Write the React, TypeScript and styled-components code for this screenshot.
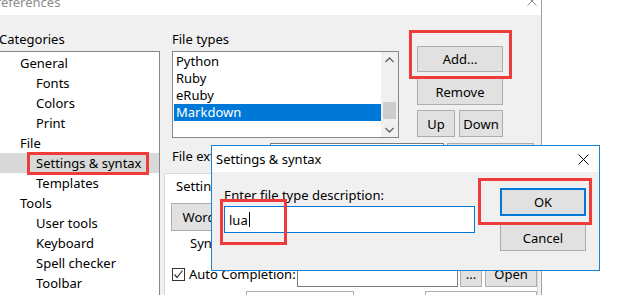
import styled, { createGlobalStyle } from "styled-components";

const GlobalStyle = createGlobalStyle`
  html, body {
    margin: 0;
    padding: 0;
    background: #fff;
  }
  body {
    font-family: "Noto Sans", "Open Sans", sans-serif;
    font-size: 13px;
    color: #000;
  }
`;

const RED = "#ee3b3b";

const Stage = styled.div`
  position: relative;
  width: 642px;
  height: 295px;
  overflow: hidden;
  background: #fff;
`;

const Window = styled.div`
  width: 542px;
  height: 320px;
  box-sizing: border-box;
  border-right: 1px solid #a0a0a0;
  display: flex;
  flex-direction: column;
  background: #f0f0f0;
`;

const TitleBar = styled.div`
  height: 15px;
  flex-shrink: 0;
  background: #fff;
  display: flex;
  justify-content: space-between;
  overflow: hidden;
`;

const TitleText = styled.span`
  margin: -6px 0 0 -12px;
  line-height: 16px;
  color: #8c8c8c;
`;

const TitleClose = styled.svg`
  margin: -4px 4px 0 0;
`;

const Body = styled.div`
  flex: 1;
  display: flex;
`;

const LeftPane = styled.div`
  width: 160px;
  display: flex;
  flex-direction: column;
  padding-top: 16px;
`;

const Label = styled.div<{ $indent?: number }>`
  line-height: 16px;
  height: 16px;
  margin-left: ${(p) => p.$indent ?? 0}px;
  white-space: nowrap;
`;

const Tree = styled.div`
  margin: 4px 0 0 -3px;
  width: 163px;
  flex: 1;
  box-sizing: border-box;
  border: 1px solid #828790;
  background: #fff;
  padding-top: 1px;
`;

const TreeRow = styled.div<{ $level: number; $selected?: boolean }>`
  height: 20px;
  line-height: 20px;
  padding-left: ${(p) => (p.$level === 0 ? 22 : 38)}px;
  background: ${(p) => (p.$selected ? "#d9d9d9" : "transparent")};
  white-space: nowrap;
`;

const RightPane = styled.div`
  flex: 1;
  padding-left: 12px;
  display: flex;
  flex-direction: column;
`;

const TopRow = styled.div`
  display: flex;
`;

const FileTypesGroup = styled.div`
  width: 227px;
  padding-top: 16px;
`;

const ListBox = styled.div`
  margin-top: 4px;
  height: 87px;
  box-sizing: border-box;
  border: 1px solid #828790;
  background: #fff;
  display: flex;
  padding: 1px 0 0 1px;
`;

const ListItems = styled.div`
  flex: 1;
`;

const ListItem = styled.div<{ $selected?: boolean }>`
  height: 17px;
  line-height: 17px;
  padding-left: 2px;
  background: ${(p) => (p.$selected ? "#0078d7" : "transparent")};
  color: ${(p) => (p.$selected ? "#fff" : "#000")};
`;

const ScrollBar = styled.div`
  width: 17px;
  margin-top: -1px;
  background: #f0f0f0;
  display: flex;
  flex-direction: column;
  align-items: center;
  justify-content: space-between;
  padding: 5px 0 4px;
  box-sizing: border-box;
  position: relative;
`;

const ScrollThumb = styled.div`
  position: absolute;
  left: 2px;
  right: 2px;
  top: 50px;
  height: 17px;
  background: #cdcdcd;
`;

const ButtonCol = styled.div`
  margin: 31px 0 0 18px;
  width: 86px;
  display: flex;
  flex-direction: column;
`;

const Button = styled.div<{ $w?: number; $h?: number; $primary?: boolean }>`
  width: ${(p) => (p.$w ? `${p.$w}px` : "100%")};
  height: ${(p) => p.$h ?? 27}px;
  box-sizing: border-box;
  flex-shrink: 0;
  background: #e1e1e1;
  border: ${(p) => (p.$primary ? "2px solid #0078d7" : "1px solid #adadad")};
  display: flex;
  align-items: center;
  justify-content: center;
  white-space: nowrap;
`;

const ButtonPair = styled.div`
  display: flex;
  gap: 4px;
  margin-top: 5px;
`;

const ExtRow = styled.div`
  display: flex;
  align-items: center;
  margin-top: 5px;
  height: 26px;
`;

const TextBox = styled.div<{ $w: number; $h?: number; $focus?: boolean }>`
  width: ${(p) => p.$w}px;
  height: ${(p) => p.$h ?? 26}px;
  box-sizing: border-box;
  border: 1px solid ${(p) => (p.$focus ? "#0078d7" : "#7a7a7a")};
  background: #fff;
  display: flex;
  align-items: center;
  padding-left: 4px;
  flex-shrink: 0;
`;

const Tabs = styled.div`
  margin: 4px 0 0 -8px;
  width: 374px;
  flex: 1;
  display: flex;
  flex-direction: column;
`;

const TabStrip = styled.div`
  display: flex;
  height: 24px;
`;

const Tab = styled.div`
  padding: 0 11px;
  border: 1px solid #d9d9d9;
  border-bottom: none;
  background: #fff;
  line-height: 24px;
  margin-bottom: -1px;
  position: relative;
`;

const TabPanel = styled.div`
  flex: 1;
  border: 1px solid #d9d9d9;
  background: #fff;
  padding: 5px 0 0 6px;
  display: flex;
  flex-direction: column;
`;

const PanelRow = styled.div<{ $top?: number }>`
  display: flex;
  align-items: center;
  margin-top: ${(p) => p.$top ?? 0}px;
`;

const CheckBox = styled.div`
  width: 13px;
  height: 13px;
  box-sizing: border-box;
  border: 1px solid #333;
  background: #fff;
  margin: 0 4px 0 1px;
  display: flex;
  align-items: center;
  justify-content: center;
`;

const NextRowBox = styled.div<{ $w: number; $left: number }>`
  width: ${(p) => p.$w}px;
  margin-left: ${(p) => p.$left}px;
  height: 6px;
  box-sizing: border-box;
  border: 1px solid #adadad;
  border-bottom: none;
`;

/* overlay dialog */
const Dialog = styled.div`
  position: absolute;
  left: 211px;
  top: 145px;
  width: 389px;
  height: 126px;
  box-sizing: border-box;
  border: 1px solid #1883d7;
  background: #f0f0f0;
  display: flex;
  flex-direction: column;
`;

const DialogTitle = styled.div`
  height: 26px;
  background: #fff;
  display: flex;
  align-items: center;
  justify-content: space-between;
  padding: 0 10px 0 4px;
`;

const DialogBody = styled.div`
  display: flex;
  padding-left: 12px;
`;

const DialogForm = styled.div`
  padding-top: 15px;
  width: 262px;
`;

const DialogButtons = styled.div`
  padding-top: 16px;
  margin-left: 14px;
  display: flex;
  flex-direction: column;
  gap: 8px;
`;

const Caret = styled.span`
  display: inline-block;
  width: 1px;
  height: 15px;
  background: #000;
  margin-left: 1px;
`;

const Highlight = styled.div<{ $x: number; $y: number; $w: number; $h: number }>`
  position: absolute;
  left: ${(p) => p.$x}px;
  top: ${(p) => p.$y}px;
  width: ${(p) => p.$w}px;
  height: ${(p) => p.$h}px;
  box-sizing: border-box;
  border: 3px solid ${RED};
  pointer-events: none;
`;

const Chevron = ({ up }: { up?: boolean }) => (
  <svg width="9" height="6" viewBox="0 0 9 6">
    <polyline
      points={up ? "0.5,5 4.5,1 8.5,5" : "0.5,1 4.5,5 8.5,1"}
      fill="none"
      stroke="#606060"
      strokeWidth="1.3"
    />
  </svg>
);

const Cross = ({ color, size }: { color: string; size: number }) => (
  <svg width={size} height={size} viewBox={`0 0 ${size} ${size}`}>
    <line x1="0.5" y1="0.5" x2={size - 0.5} y2={size - 0.5} stroke={color} strokeWidth="1" />
    <line x1={size - 0.5} y1="0.5" x2="0.5" y2={size - 0.5} stroke={color} strokeWidth="1" />
  </svg>
);

const tree: { label: string; level: number; selected?: boolean }[] = [
  { label: "General", level: 0 },
  { label: "Fonts", level: 1 },
  { label: "Colors", level: 1 },
  { label: "Print", level: 1 },
  { label: "File", level: 0 },
  { label: "Settings & syntax", level: 1, selected: true },
  { label: "Templates", level: 1 },
  { label: "Tools", level: 0 },
  { label: "User tools", level: 1 },
  { label: "Keyboard", level: 1 },
  { label: "Spell checker", level: 1 },
  { label: "Toolbar", level: 1 },
];

const fileTypes = ["Python", "Ruby", "eRuby", "Markdown"];

export default function App() {
  return (
    <Stage>
      <GlobalStyle />
      <Window>
        <TitleBar>
          <TitleText>Preferences</TitleText>
          <TitleClose width="10" height="10" viewBox="0 0 10 10">
            <line x1="0.5" y1="0.5" x2="9.5" y2="9.5" stroke="#8c8c8c" />
            <line x1="9.5" y1="0.5" x2="0.5" y2="9.5" stroke="#8c8c8c" />
          </TitleClose>
        </TitleBar>
        <Body>
          <LeftPane>
            <Label $indent={-1}>Categories</Label>
            <Tree>
              {tree.map((t) => (
                <TreeRow key={t.label} $level={t.level} $selected={t.selected}>
                  {t.label}
                </TreeRow>
              ))}
            </Tree>
          </LeftPane>

          <RightPane>
            <TopRow>
              <FileTypesGroup>
                <Label>File types</Label>
                <ListBox>
                  <ListItems>
                    {fileTypes.map((f) => (
                      <ListItem key={f} $selected={f === "Markdown"}>
                        {f}
                      </ListItem>
                    ))}
                  </ListItems>
                  <ScrollBar>
                    <Chevron up />
                    <ScrollThumb />
                    <Chevron />
                  </ScrollBar>
                </ListBox>
              </FileTypesGroup>
              <ButtonCol>
                <Button $h={26}>Add...</Button>
                <Button style={{ marginTop: 6 }}>Remove</Button>
                <ButtonPair>
                  <Button $w={38}>Up</Button>
                  <Button $w={44}>Down</Button>
                </ButtonPair>
              </ButtonCol>
            </TopRow>

            <ExtRow>
              <Label style={{ width: 98 }}>File extensions:</Label>
              <TextBox $w={174} />
              <Button $w={87} $h={26} style={{ marginLeft: 3 }}>
                Open
              </Button>
            </ExtRow>

            <Tabs>
              <TabStrip>
                <Tab>Settings</Tab>
              </TabStrip>
              <TabPanel>
                <PanelRow>
                  <Button $w={90} $h={28}>
                    Word wrap
                  </Button>
                </PanelRow>
                <PanelRow $top={4}>
                  <Label $indent={19}>Syntax file:</Label>
                </PanelRow>
                <PanelRow $top={10}>
                  <CheckBox>
                    <svg width="11" height="11" viewBox="0 0 11 11">
                      <polyline points="1.5,5.5 4,8.5 9.5,1.5" fill="none" stroke="#333" strokeWidth="1.2" />
                    </svg>
                  </CheckBox>
                  <Label style={{ width: 109 }}>Auto Completion:</Label>
                  <TextBox $w={161} />
                  <Button $w={22} $h={26} style={{ marginLeft: 2 }}>
                    ...
                  </Button>
                  <Button $w={52} $h={26} style={{ marginLeft: 3 }}>
                    Open
                  </Button>
                </PanelRow>
                <PanelRow $top={4}>
                  <NextRowBox $w={109} $left={75} />
                  <NextRowBox $w={114} $left={71} />
                </PanelRow>
              </TabPanel>
            </Tabs>
          </RightPane>
        </Body>
      </Window>

      <Dialog>
        <DialogTitle>
          <span>Settings &amp; syntax</span>
          <Cross color="#000" size={11} />
        </DialogTitle>
        <DialogBody>
          <DialogForm>
            <Label>Enter file type description:</Label>
            <TextBox $w={251} $h={27} $focus style={{ marginTop: 3 }}>
              lua
              <Caret />
            </TextBox>
          </DialogForm>
          <DialogButtons>
            <Button $w={86} $h={28} $primary>
              OK
            </Button>
            <Button $w={86} $h={27}>
              Cancel
            </Button>
          </DialogButtons>
        </DialogBody>
      </Dialog>

      <Highlight $x={409} $y={30} $w={103} $h={49} />
      <Highlight $x={27} $y={152} $w={122} $h={23} />
      <Highlight $x={220} $y={199} $w={67} $h={46} />
      <Highlight $x={478} $y={178} $w={114} $h={47} />
    </Stage>
  );
}
